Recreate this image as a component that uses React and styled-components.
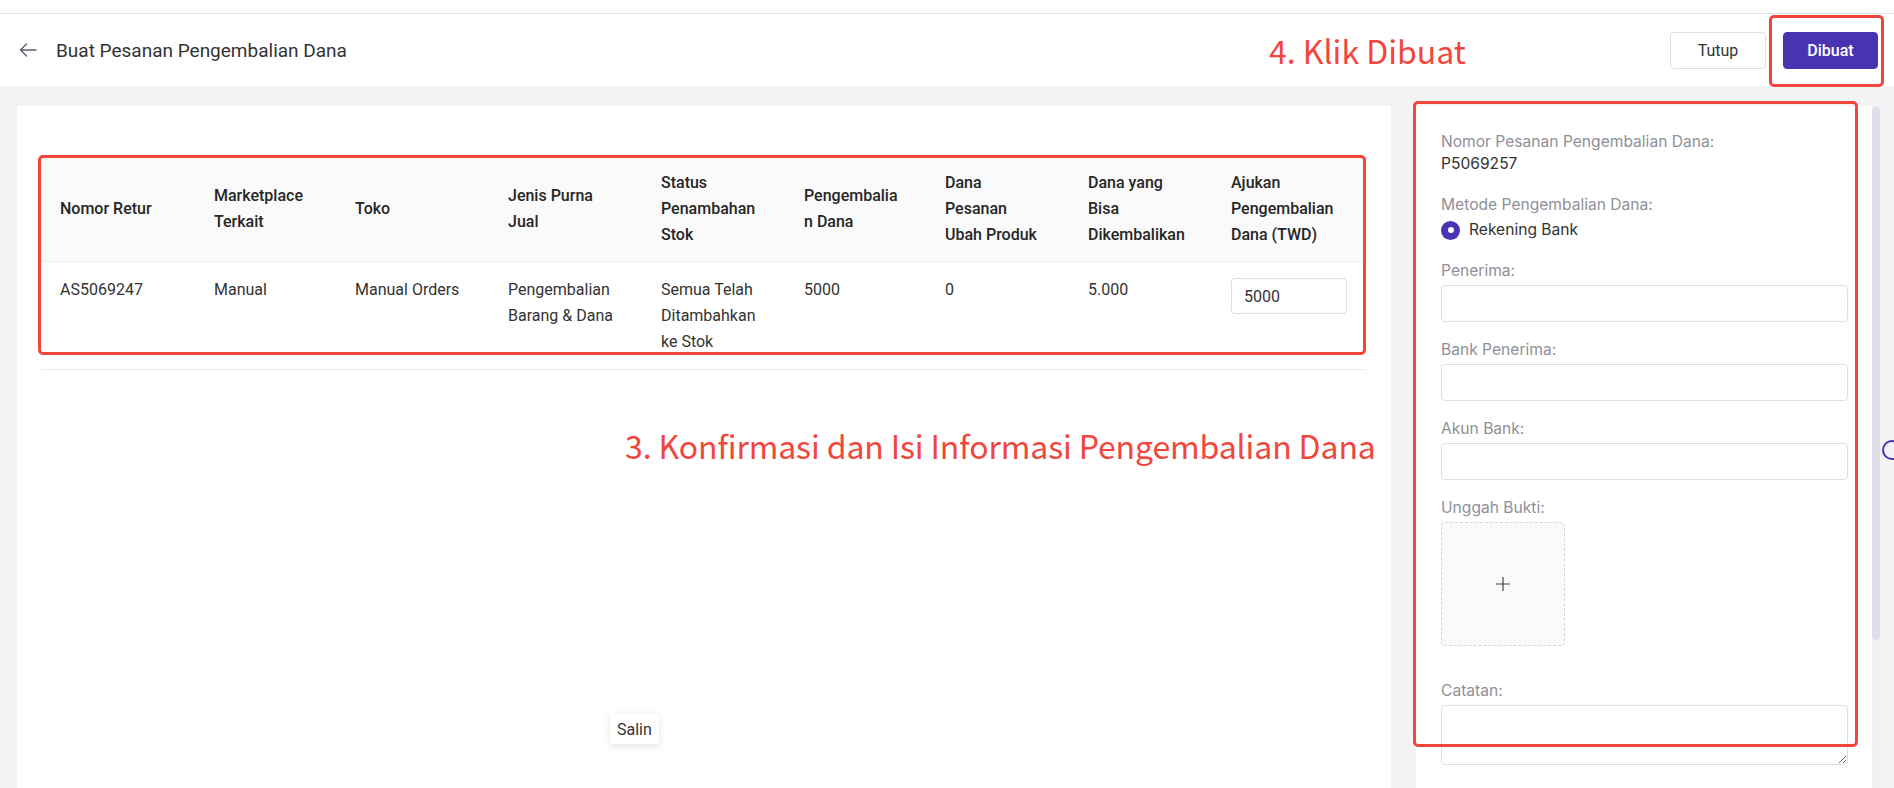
import React from 'react';
import styled, { createGlobalStyle } from 'styled-components';

const GlobalStyle = createGlobalStyle`
  html, body {
    margin: 0;
    padding: 0;
    background: #f3f3f4;
    font-family: Roboto, "Liberation Sans", sans-serif;
    color: #333;
  }
  * { box-sizing: border-box; }
`

const Page = styled.div`
  height: 788px;
  display: flex;
  flex-direction: column;
  overflow: hidden;
`

const TopStrip = styled.div`
  height: 14px;
  background: #fff;
  border-bottom: 1px solid #e4e4e6;
`

const Header = styled.div`
  position: relative;
  height: 72px;
  background: #fff;
  display: flex;
  align-items: center;
  padding: 0 16px 0 19px;
`

const BackButton = styled.span`
  display: flex;
  width: 18px;
  margin-right: 19px;
  color: #5c5f6a;
`

const Title = styled.h1`
  margin: 0;
  font-size: 19px;
  font-weight: 400;
  color: #333;
  flex: 1;
`

const Button = styled.button`
  height: 37px;
  width: ${props => props.width || 96}px;
  border-radius: 4px;
  font-family: Roboto, "Liberation Sans", sans-serif;
  font-size: 16px;
  font-weight: ${props => props.primary ? 500 : 400};
  border: 1px solid ${props => props.primary ? '#4834b3' : '#dcdfe6'};
  background: ${props => props.primary ? '#4834b3' : '#fff'};
  color: ${props => props.primary ? '#fff' : '#333'};
  margin-left: ${props => props.gap || 0}px;
  cursor: pointer;
`

const Note = styled.div`
  position: absolute;
  top: ${props => props.top}px;
  left: ${props => props.left}px;
  font-family: "Noto Sans CJK SC", "Liberation Sans", sans-serif;
  font-size: 32px;
  line-height: 40px;
  color: #f2463c;
  white-space: nowrap;
  letter-spacing: ${props => props.spacing || 0}px;
`

const Mark = styled.div`
  position: absolute;
  top: ${props => props.top}px;
  left: ${props => props.left}px;
  width: ${props => props.width}px;
  height: ${props => props.height}px;
  border: 3px solid #f2463c;
  border-radius: 5px;
  pointer-events: none;
`

const Main = styled.div`
  position: relative;
  flex: 1;
  display: flex;
  padding: 20px 14px 0 17px;
  overflow: hidden;
`

const LeftPanel = styled.div`
  position: relative;
  flex: 1;
  background: #fff;
  padding: 51px 25px 0 24px;
`

const TableWrap = styled.div`
  position: relative;
`

const Table = styled.table`
  width: 100%;
  table-layout: fixed;
  border-collapse: collapse;
  font-size: 16px;
  line-height: 26px;
`

const Th = styled.th`
  text-align: left;
  font-weight: 500;
  color: #262626;
  background: #fafafa;
  padding: 13px 22px 13px 19px;
  vertical-align: middle;
  border-bottom: 1px solid #ebeef5;
  overflow-wrap: break-word;
`

const Td = styled.td`
  text-align: left;
  font-weight: 400;
  color: #333;
  padding: 15px 22px 14px 19px;
  vertical-align: top;
  border-bottom: 1px solid #ebebeb;
  overflow-wrap: break-word;
`

const AmountInput = styled.input`
  display: block;
  width: 116px;
  height: 36px;
  margin-top: 1px;
  border: 1px solid #dcdfe6;
  border-radius: 4px;
  padding: 0 12px;
  font-family: Roboto, "Liberation Sans", sans-serif;
  font-size: 16px;
  color: #333;
  outline: none;
`

const Tooltip = styled.div`
  position: absolute;
  left: 593px;
  top: 608px;
  height: 30px;
  padding: 0 7px;
  display: flex;
  align-items: center;
  background: #fff;
  border-radius: 4px;
  box-shadow: 0 2px 8px rgba(0, 0, 0, 0.12);
  font-size: 16px;
  color: #333;
`

const Side = styled.div`
  position: relative;
  display: flex;
  margin-left: 25px;
`

const RightPanel = styled.div`
  width: 456px;
  background: #fff;
  padding: 25px 24px 0 25px;
  font-family: Inter, "Liberation Sans", sans-serif;
  font-size: 15.6px;
  line-height: 22px;
`

const ScrollTrack = styled.div`
  width: 8px;
  background: #f0f0f2;
`

const ScrollThumb = styled.div`
  margin-top: 1px;
  height: 533px;
  background: #dcdfe7;
  border-radius: 4px;
`

const Group = styled.div`
  margin-bottom: ${props => props.space || 17}px;
`

const Label = styled.div`
  color: #8f8f99;
  margin-bottom: ${props => props.tight ? 0 : 3}px;
`

const Value = styled.div`
  color: #333;
`

const Radio = styled.label`
  display: flex;
  align-items: center;
  color: #333;
  margin-top: 1px;
`

const RadioDot = styled.span`
  width: 19px;
  height: 19px;
  border-radius: 50%;
  background: #4834b3;
  display: flex;
  align-items: center;
  justify-content: center;
  margin-right: 9px;

  &::after {
    content: '';
    width: 6px;
    height: 6px;
    border-radius: 50%;
    background: #fff;
  }
`

const TextInput = styled.input`
  display: block;
  width: 100%;
  height: 37px;
  border: 1px solid #dcdfe6;
  border-radius: 4px;
  outline: none;
`

const Upload = styled.div`
  width: 124px;
  height: 124px;
  border: 1px dashed #d4d6de;
  border-radius: 4px;
  background: #fafafa;
  display: flex;
  align-items: center;
  justify-content: center;
  color: #444;
`

const TextArea = styled.textarea`
  display: block;
  width: 100%;
  height: 60px;
  border: 1px solid #dcdfe6;
  border-radius: 4px;
  outline: none;
  resize: vertical;
`

const FloatRing = styled.div`
  position: absolute;
  top: 354px;
  right: -8px;
  width: 20px;
  height: 20px;
  border: 2px solid #4834b3;
  border-radius: 50%;
`

const columns = [154, 141, 153, 153, 143, 141, 143, 143, 154]

const heads = [
  'Nomor Retur',
  'Marketplace Terkait',
  'Toko',
  'Jenis Purna Jual',
  'Status Penambahan Stok',
  'Pengembalian Dana',
  'Dana Pesanan Ubah Produk',
  'Dana yang Bisa Dikembalikan',
  'Ajukan Pengembalian Dana (TWD)'
]

const row = [
  'AS5069247',
  'Manual',
  'Manual Orders',
  'Pengembalian Barang & Dana',
  'Semua Telah Ditambahkan ke Stok',
  '5000',
  '0',
  '5.000'
]

const ArrowLeft = () => (
  <svg width="18" height="14" viewBox="0 0 18 14" fill="none" stroke="currentColor" strokeWidth="1.4" strokeLinecap="round" strokeLinejoin="round">
    <path d="M17 7H1.5M7.5 1L1.5 7l6 6" />
  </svg>
)

const Plus = () => (
  <svg width="14" height="14" viewBox="0 0 14 14" stroke="currentColor" strokeWidth="1.2">
    <path d="M7 0v14M0 7h14" />
  </svg>
)

const App = () => {
  return (
    <Page>
      <GlobalStyle />
      <TopStrip />
      <Header>
        <BackButton><ArrowLeft /></BackButton>
        <Title>Buat Pesanan Pengembalian Dana</Title>
        <Button>Tutup</Button>
        <Button primary gap={17} width={95}>Dibuat</Button>
        <Note top={16} left={1269}>4. Klik Dibuat</Note>
        <Mark top={1} left={1769} width={115} height={72} />
      </Header>

      <Main>
        <LeftPanel>
          <TableWrap>
            <Table>
              <colgroup>
                {columns.map((w, i) => <col key={i} style={{ width: w }} />)}
              </colgroup>
              <thead>
                <tr>
                  {heads.map(h => <Th key={h}>{h}</Th>)}
                </tr>
              </thead>
              <tbody>
                <tr>
                  {row.map((c, i) => <Td key={i}>{c}</Td>)}
                  <Td><AmountInput defaultValue="5000" /></Td>
                </tr>
              </tbody>
            </Table>
            <Mark top={-2} left={-3} width={1328} height={200} />
          </TableWrap>
          <Note top={319} left={608} spacing={-0.12}>3. Konfirmasi dan Isi Informasi Pengembalian Dana</Note>
          <Tooltip>Salin</Tooltip>
        </LeftPanel>

        <Side>
          <RightPanel>
            <Group space={19}>
              <Label tight>Nomor Pesanan Pengembalian Dana:</Label>
              <Value>P5069257</Value>
            </Group>
            <Group space={19}>
              <Label>Metode Pengembalian Dana:</Label>
              <Radio><RadioDot />Rekening Bank</Radio>
            </Group>
            <Group>
              <Label>Penerima:</Label>
              <TextInput />
            </Group>
            <Group>
              <Label>Bank Penerima:</Label>
              <TextInput />
            </Group>
            <Group>
              <Label>Akun Bank:</Label>
              <TextInput />
            </Group>
            <Group space={34}>
              <Label>Unggah Bukti:</Label>
              <Upload><Plus /></Upload>
            </Group>
            <Group>
              <Label>Catatan:</Label>
              <TextArea />
            </Group>
          </RightPanel>
          <ScrollTrack><ScrollThumb /></ScrollTrack>
          <Mark top={-5} left={-3} width={445} height={646} />
        </Side>
        <FloatRing />
      </Main>
    </Page>
  );
}

export default App;
